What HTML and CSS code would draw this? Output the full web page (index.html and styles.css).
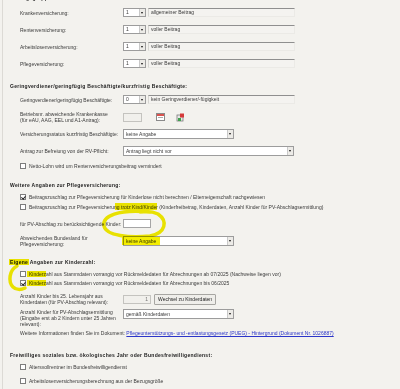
FILE: index.html
```html
<!DOCTYPE html>
<html lang="de">
<head>
  <meta charset="UTF-8" />
  <title>Sozialversicherung</title>
  <link rel="stylesheet" href="styles.css">
</head>
<body>
  <div class="page">
    <div class="title cut">Beitragsgruppen</div>

    <div class="row field-row first">
      <span class="label">Krankenversicherung:</span>
      <div class="controls"><div class="combo small"><span>1</span><i class="arrow"></i></div><div class="readonly wide">allgemeiner Beitrag</div></div>
    </div>
    <div class="row field-row">
      <span class="label">Rentenversicherung:</span>
      <div class="controls"><div class="combo small"><span>1</span><i class="arrow"></i></div><div class="readonly wide">voller Beitrag</div></div>
    </div>
    <div class="row field-row">
      <span class="label">Arbeitslosenversicherung:</span>
      <div class="controls"><div class="combo small"><span>1</span><i class="arrow"></i></div><div class="readonly wide">voller Beitrag</div></div>
    </div>
    <div class="row field-row">
      <span class="label">Pflegeversicherung:</span>
      <div class="controls"><div class="combo small"><span>1</span><i class="arrow"></i></div><div class="readonly wide">voller Beitrag</div></div>
    </div>

    <div class="title t-gering">Geringverdiener/geringfügig Beschäftigte/kurzfristig Beschäftigte:</div>
    <div class="row field-row r-gering">
      <span class="label">Geringverdiener/geringfügig Beschäftigte:</span>
      <div class="controls"><div class="combo small"><span>0</span><i class="arrow"></i></div><div class="readonly wide">kein Geringverdiener/-fügigkeit</div></div>
    </div>
    <div class="row r-betrieb">
      <span class="label">Betriebsnr. abweichende Krankenkasse<br>(für eAU, AAG, EEL und A1-Antrag):</span>
      <div class="controls">
        <div class="textbox disabled"></div>
        <span class="icon-btn">
          <svg width="9" height="8" viewBox="0 0 9 8"><rect x="0.5" y="0.5" width="8" height="7" fill="#fff" stroke="#8a8a8a"/><rect x="1" y="1" width="7" height="2" fill="#d9534f"/><rect x="2" y="4" width="5" height="1" fill="#aaa"/></svg>
        </span>
        <span class="icon-btn">
          <svg width="9" height="9" viewBox="0 0 9 9"><rect x="1" y="2" width="6" height="6" fill="#e8e8e8" stroke="#7a7a7a" stroke-width="0.8"/><rect x="4" y="0.5" width="4" height="4" fill="#d43a3a"/><rect x="2" y="5" width="3" height="3" fill="#3fa34d"/></svg>
        </span>
      </div>
    </div>
    <div class="row dd-row r-status">
      <span class="label">Versicherungsstatus kurzfristig Beschäftigte:</span>
      <div class="controls"><div class="combo mid"><span>keine Angabe</span><i class="arrow"></i></div></div>
    </div>
    <div class="row dd-row r-antrag">
      <span class="label">Antrag zur Befreiung von der RV-Pflicht:</span>
      <div class="controls"><div class="combo long"><span>Antrag liegt nicht vor</span><i class="arrow"></i></div></div>
    </div>
    <label class="check r-netto"><span class="box"></span>Netto-Lohn wird um Rentenversicherungsbeitrag vermindert</label>

    <div class="title t-pflege">Weitere Angaben zur Pflegeversicherung:</div>
    <label class="check r-pv1"><span class="box checked"></span>Beitragszuschlag zur Pflegeversicherung für Kinderlose nicht berechnen / Elterneigenschaft nachgewiesen</label>
    <label class="check r-pv2"><span class="box"></span>Beitragszuschlag zur Pflegeversicherung trotz Kind/Kinder (Kinderfreibetrag, Kinderdaten, Anzahl Kinder für PV-Abschlagsermittlung)</label>
    <div class="row field-row r-pvk">
      <span class="label">für PV-Abschlag zu berücksichtigende Kinder:</span>
      <div class="controls"><div class="textbox"></div></div>
    </div>
    <div class="row r-land">
      <span class="label">Abweichendes Bundesland für<br>Pflegeversicherung:</span>
      <div class="controls"><div class="combo mid"><span>keine Angabe</span><i class="arrow"></i></div></div>
    </div>

    <div class="title t-kinder">Eigene Angaben zur Kinderzahl:</div>
    <label class="check r-k1"><span class="box"></span>Kinderzahl aus Stammdaten vorrangig vor Rückmeldedaten für Abrechnungen ab 07/2025 (Nachweise liegen vor)</label>
    <label class="check r-k2"><span class="box checked"></span>Kinderzahl aus Stammdaten vorrangig vor Rückmeldedaten für Abrechnungen bis 06/2025</label>
    <div class="row r-anzahl">
      <span class="label">Anzahl Kinder bis 25. Lebensjahr aus<br>Kinderdaten (für PV-Abschlag relevant):</span>
      <div class="controls"><div class="textbox disabled num">1</div><span class="button">Wechsel zu Kinderdaten</span></div>
    </div>
    <div class="row r-abschlag">
      <span class="label">Anzahl Kinder für PV-Abschlagsermittlung<br>(Eingabe erst ab 2 Kindern unter 25 Jahren<br>relevant):</span>
      <div class="controls"><div class="combo mid"><span>gemäß Kinderdaten</span><i class="arrow"></i></div></div>
    </div>
    <p class="info">Weitere Informationen finden Sie im Dokument: <a href="#">Pflegeunterstützungs- und -entlastungsgesetz (PUEG) - Hintergrund (Dokument Nr. 1026887)</a></p>

    <div class="title t-frei">Freiwilliges soziales bzw. ökologisches Jahr oder Bundesfreiwilligendienst:</div>
    <label class="check r-f1"><span class="box"></span>Altersvollrentner im Bundesfreiwilligendienst</label>
    <label class="check r-f2"><span class="box"></span>Arbeitslosenversicherungsberechnung aus der Bezugsgröße</label>

    <!-- Markierungen (Textmarker) liegen über dem Formular -->
    <svg class="marks" width="400" height="389" viewBox="0 0 400 389">
      <g fill="#f4ee00">
        <rect x="115" y="203" width="42" height="7"/>
        <rect x="122" y="237" width="38" height="8"/>
        <rect x="9" y="259" width="20" height="6"/>
        <rect x="27" y="271" width="19" height="6"/>
        <rect x="27" y="280" width="19" height="6"/>
      </g>
      <g fill="none" stroke="#f4ee00" stroke-width="3.5" stroke-linecap="round">
        <path d="M150 212 C 118 209, 102 216, 104 226 C 106 236, 130 238, 150 236 C 166 233, 168 221, 158 214 C 152 211, 146 211, 140 212"/>
        <path d="M17 266 C 9 270, 8 282, 13 287 C 16 290, 21 290, 25 288"/>
      </g>
    </svg>
  </div>
</body>
</html>
```

FILE: styles.css
```css
* { box-sizing: border-box; }
html, body {
  margin: 0; padding: 0;
  width: 400px; height: 389px;
  overflow: hidden;
  background-color: #f3f2ee;
  font-family: "Liberation Sans", Arial, sans-serif;
  font-size: 5px;
  color: #3a3a3a;
}
.page {
  position: relative;
  display: flow-root;
  height: 389px;
  border-left: 1px solid #dcdad5;
  margin-left: 2px;
}
.title {
  padding-left: 7px;
  font-weight: bold;
  letter-spacing: 0.3px;
  color: #1a1a1a;
  line-height: 8px;
  height: 8px;
  white-space: nowrap;
}
.title.cut { margin-top: -6px; height: 9px; }
.row {
  display: grid;
  grid-template-columns: 103px auto;
  align-items: center;
  padding-left: 17px;
}
.label { line-height: 6px; white-space: nowrap; }
.controls { display: flex; align-items: center; gap: 3px; }

.field-row { height: 9px; margin-top: 8px; }
.field-row.first { margin-top: 5px; }

.combo {
  display: flex;
  height: 9px;
  background: #fff;
  border: 1px solid #9c9c9c;
  line-height: 7px;
}
.combo span { flex: 1; padding-left: 2px; overflow: hidden; white-space: nowrap; }
.combo .arrow {
  width: 6px;
  border-left: 1px solid #c9c9c9;
  background: #ecebe7;
  position: relative;
}
.combo .arrow::after {
  content: "";
  position: absolute;
  left: 1px; top: 3px;
  border-left: 1.5px solid transparent;
  border-right: 1.5px solid transparent;
  border-top: 2px solid #111;
}
.combo.small { width: 23px; }
.combo.mid { width: 111px; height: 10px; line-height: 8px; }
.combo.long { width: 171px; height: 10px; line-height: 8px; }

.readonly {
  height: 9px;
  line-height: 7px;
  padding-left: 2px;
  background: #f4f3f0;
  border-top: 1px solid #8f8f8f;
  border-left: 1px solid #d6d5d1;
  border-right: 1px solid #ebeae6;
  border-bottom: 1px solid #ebeae6;
  white-space: nowrap;
  overflow: hidden;
}
.readonly.wide { width: 147px; margin-left: -1px; }

.textbox {
  width: 28px;
  height: 9px;
  line-height: 7px;
  background: #fff;
  border: 1px solid #a5a5a5;
  padding: 0 2px;
}
.textbox.disabled { background: #f1f0ec; border-color: #c4c3bf; width: 19px; }
.textbox.num { width: 28px; text-align: right; color: #777; }

.icon-btn {
  display: flex;
  align-items: center;
  justify-content: center;
  width: 10px;
  height: 9px;
}
.icon-btn:first-of-type { margin-left: 10px; }
.icon-btn + .icon-btn { margin-left: 7px; }

.button {
  height: 11px;
  line-height: 9px;
  padding: 0 3px;
  border: 1px solid #a7a6a2;
  border-radius: 1px;
  background: #efeeea;
  color: #222;
  white-space: nowrap;
}

.r-gering { margin-top: 5px; }
.r-betrieb { height: 12px; margin-top: 7px; }
.r-status { height: 10px; margin-top: 6px; }
.r-antrag { height: 10px; margin-top: 7px; }
.r-netto { margin-top: 7px; }
.t-gering { margin-top: 14px; }
.t-pflege { margin-top: 12px; }
.r-pv1 { margin-top: 5px; }
.r-pv2 { margin-top: 4px; }
.r-pvk { margin-top: 9px; }
.r-land { height: 12px; margin-top: 7px; }
.t-kinder { margin-top: 11px; }
.r-k1 { margin-top: 5px; }
.r-k2 { margin-top: 3px; }
.r-anzahl { height: 12px; margin-top: 7px; }
.r-abschlag { height: 18px; margin-top: 4px; align-items: start; }
.t-frei { margin-top: 15px; }
.r-f1 { margin-top: 5px; }
.r-f2 { margin-top: 8px; }

.check {
  display: flex;
  align-items: center;
  gap: 3px;
  height: 6px;
  padding-left: 17px;
  white-space: nowrap;
}
.check .box {
  width: 6px;
  height: 6px;
  flex: none;
  background: #fff;
  border: 1px solid #7d7d7d;
  position: relative;
}
.check .box.checked::after {
  content: "";
  position: absolute;
  left: 1px; top: 0;
  width: 1.5px; height: 3px;
  border-right: 1px solid #222;
  border-bottom: 1px solid #222;
  transform: rotate(40deg);
}

.info {
  margin: 3px 0 0;
  padding-left: 17px;
  line-height: 6px;
  white-space: nowrap;
}
.info a { color: #2b35c9; text-decoration: underline; }

.marks {
  position: absolute;
  top: 0; left: -3px;
  mix-blend-mode: multiply;
  pointer-events: none;
}
```
